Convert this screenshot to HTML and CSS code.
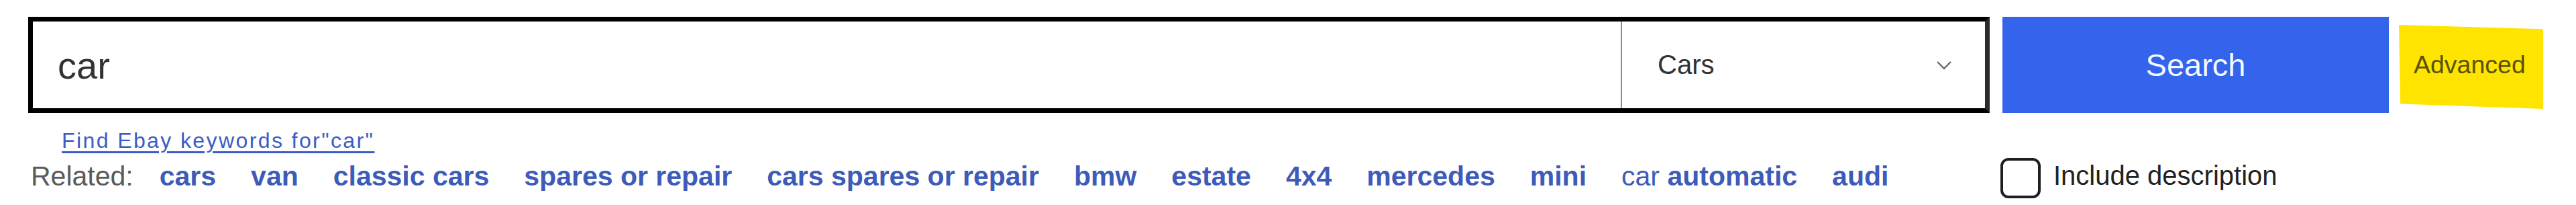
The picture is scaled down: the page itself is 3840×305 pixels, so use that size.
FILE: index.html
```html
<!DOCTYPE html>
<html lang="en">
<head>
<meta charset="utf-8">
<title>Search</title>
<link rel="stylesheet" href="styles.css">
</head>
<body>
<div class="wrap">
  <div class="toolbar">
    <div class="searchbox">
      <div class="query"><input class="query-input" type="text" value="car" aria-label="Search"></div>
      <div class="category">
        <span class="category-value">Cars</span>
        <svg class="chevron" width="24" height="14" viewBox="0 0 24 14" aria-hidden="true"><path d="M2 2 L12 12 L22 2" fill="none" stroke="#6b6b6b" stroke-width="2.4"/></svg>
      </div>
    </div>
    <div class="search-btn">Search</div>
    <div class="advanced"><span>Advanced</span></div>
  </div>
  <div class="keywords-line"><a class="keywords" href="#">Find Ebay keywords for"car"</a></div>
  <div class="bottom-row">
    <div class="related">
      <span class="related-label">Related:</span>
      <ul class="related-list">
        <li><a href="#">cars</a></li>
        <li><a href="#">van</a></li>
        <li><a href="#">classic cars</a></li>
        <li><a href="#">spares or repair</a></li>
        <li><a href="#">cars spares or repair</a></li>
        <li><a href="#">bmw</a></li>
        <li><a href="#">estate</a></li>
        <li><a href="#">4x4</a></li>
        <li><a href="#">mercedes</a></li>
        <li><a href="#">mini</a></li>
        <li><a href="#"><span class="plain">car</span> automatic</a></li>
        <li><a href="#">audi</a></li>
      </ul>
    </div>
    <label class="include">
      <span class="checkbox"></span>
      <span class="include-text">Include description</span>
    </label>
  </div>
</div>
</body>
</html>
```

FILE: styles.css
```css
html, body {
  margin: 0;
  padding: 0;
  background: #ffffff;
}

.wrap {
  padding: 25px 0 0 42px;
  font-family: "Liberation Sans", Arial, sans-serif;
}

.toolbar {
  display: flex;
  align-items: flex-start;
}

.searchbox {
  display: flex;
  box-sizing: border-box;
  width: 2924px;
  height: 143px;
  border: 7px solid #000;
  border-right-color: #2a2a2a;
}

.query {
  flex: 1;
  display: flex;
  align-items: center;
  padding-left: 37px;
  padding-top: 2px;
}

.query-input {
  width: 100%;
  border: 0;
  outline: none;
  padding: 0;
  margin: 0;
  background: transparent;
  font-family: "Liberation Sans", Arial, sans-serif;
  font-size: 56px;
  line-height: 64px;
  height: 64px;
  color: #333;
}

.category {
  box-sizing: border-box;
  width: 543px;
  border-left: 2px solid #8c8c8c;
  display: flex;
  align-items: center;
  justify-content: space-between;
  padding: 0 49px 0 53px;
  font-size: 40px;
  color: #333;
}

.chevron {
  display: block;
}

.search-btn {
  margin-left: 19px;
  width: 576px;
  height: 143px;
  background: #3463ec;
  color: #f4f8ff;
  font-size: 47px;
  display: flex;
  align-items: center;
  justify-content: center;
}

.advanced {
  margin-left: 15px;
  margin-top: 12px;
  box-sizing: border-box;
  width: 215px;
  height: 125px;
  background: #ffe400;
  clip-path: polygon(0 0, 100% 5%, 100% 100%, 1% 94%);
  display: flex;
  align-items: center;
  padding: 0 0 6px 22px;
  font-size: 37.5px;
  color: #58520a;
}

.keywords-line {
  margin-top: 21px;
  padding-left: 50px;
  line-height: 40px;
  height: 40px;
}

.keywords {
  font-size: 32px;
  letter-spacing: 2.4px;
  color: #3b5cc4;
  text-decoration: underline;
  text-underline-offset: 5px;
}

.bottom-row {
  margin-top: 6px;
  display: flex;
  align-items: center;
  height: 60px;
}

.related {
  flex: none;
  box-sizing: border-box;
  width: 2940px;
  padding-left: 4px;
  margin-bottom: 6px;
  display: flex;
  align-items: baseline;
  font-size: 41px;
  line-height: 48px;
}

.related-label {
  color: #5a5a5a;
  margin-right: 39px;
}

.related-list {
  display: flex;
  gap: 52px;
  list-style: none;
  margin: 0;
  padding: 0;
}

.related-list a {
  color: #3d5bb8;
  font-weight: bold;
  text-decoration: none;
  white-space: nowrap;
}

.related-list .plain {
  font-weight: normal;
}

.include {
  display: flex;
  align-items: center;
}

.checkbox {
  box-sizing: border-box;
  width: 60px;
  height: 60px;
  border: 4px solid #1e1e1e;
  border-radius: 12px;
  background: #fff;
}

.include-text {
  margin-left: 19px;
  margin-bottom: 8px;
  font-size: 40px;
  line-height: 48px;
  color: #222;
}
```
